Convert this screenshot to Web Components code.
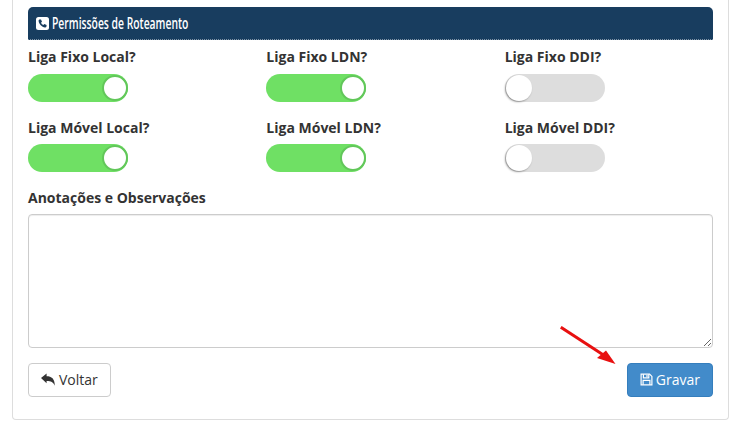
<!DOCTYPE html>
<html lang="pt">
<head>
<meta charset="utf-8">
<title>Permissões de Roteamento</title>
<style>
  html, body { margin: 0; height: 100%; background: #fff; overflow: hidden; }
  body { font-family: "Open Sans", "Liberation Sans", sans-serif; color: #333; }
</style>
</head>
<body>
<route-panel>
  <section-title>Permissões de Roteamento</section-title>
  <div slot="grid">
    <route-toggle label="Liga Fixo Local?" checked></route-toggle>
    <route-toggle label="Liga Fixo LDN?" checked></route-toggle>
    <route-toggle label="Liga Fixo DDI?"></route-toggle>
    <route-toggle label="Liga Móvel Local?" checked></route-toggle>
    <route-toggle label="Liga Móvel LDN?" checked></route-toggle>
    <route-toggle label="Liga Móvel DDI?"></route-toggle>
  </div>
  <notes-field slot="notes" label="Anotações e Observações"></notes-field>
  <action-button slot="back" icon="reply">Voltar</action-button>
  <action-button slot="save" icon="save" primary>Gravar</action-button>
</route-panel>

<script>
// painel externo com borda; o topo fica cortado pela janela
class RoutePanel extends HTMLElement {
    constructor() {
        super();
        this.attachShadow({ mode: 'open' });
    }

    connectedCallback() {
        this.shadowRoot.innerHTML = `
            <style>
                :host {
                    display: block;
                    width: 717px;
                    height: 421px;
                    margin: -1px 0 0 12px;
                    box-sizing: border-box;
                    border: 1px solid #ddd;
                    border-top: 0;
                    border-radius: 0 0 4px 4px;
                    padding: 8px 15px 0;
                    position: relative;
                }
                ::slotted([slot="grid"]) {
                    display: grid;
                    grid-template-columns: repeat(3, 238.33px);
                    row-gap: 16.2px;
                    margin-top: 7.4px;
                }
                .actions {
                    display: flex;
                    justify-content: space-between;
                    margin-top: 15px;
                }
                .arrow {
                    position: absolute;
                    left: 547px;
                    top: 327px;
                }
            </style>
            <slot></slot>
            <slot name="grid"></slot>
            <slot name="notes"></slot>
            <div class="actions">
                <slot name="back"></slot>
                <slot name="save"></slot>
            </div>
            <svg class="arrow" width="64" height="42" viewBox="0 0 64 42">
                <path d="M0.8 1.2 L45 30" stroke="#e81010" stroke-width="3" fill="none"/>
                <path d="M55.5 38 L37 32 L46 24.5 Z" fill="#e81010"/>
            </svg>
        `;
    }
}

// barra azul do título da seção
class SectionTitle extends HTMLElement {
    constructor() {
        super();
        this.attachShadow({ mode: 'open' });
    }

    connectedCallback() {
        this.shadowRoot.innerHTML = `
            <style>
                :host {
                    display: flex;
                    align-items: center;
                    height: 33px;
                    box-sizing: border-box;
                    padding-left: 8px;
                    background: #183d5f;
                    border-radius: 5px 5px 0 0;
                    border-bottom: 1px dotted #7f93a6;
                    color: #fff;
                }
                svg { flex: none; margin-right: 3px; }
                .text {
                    display: inline-block;
                    font: 600 17px "Open Sans", sans-serif;
                    white-space: nowrap;
                    margin-top: -2px;
                    transform: scaleX(0.608);
                    transform-origin: left center;
                }
            </style>
            <svg width="13" height="13" viewBox="0 0 13 13">
                <rect width="13" height="13" rx="2.5" fill="#fff"/>
                <path d="M3.4 2.6 L5 2.4 L6 4.8 L5 5.7 C5.5 6.8 6.3 7.6 7.4 8.1 L8.3 7.1 L10.6 8.1 L10.4 9.7 C10.2 10.3 9.6 10.6 9 10.5 C5.8 10.1 3 7.3 2.6 4.1 C2.5 3.4 2.8 2.8 3.4 2.6 Z" fill="#183d5f"/>
            </svg>
            <span class="text"><slot></slot></span>
        `;
    }
}

// rótulo + chave liga/desliga
class RouteToggle extends HTMLElement {
    constructor() {
        super();
        this.attachShadow({ mode: 'open' });
    }

    connectedCallback() {
        const label = this.getAttribute('label');
        this.shadowRoot.innerHTML = `
            <style>
                :host { display: block; }
                .label {
                    display: block;
                    font: 700 14px/20px "Open Sans", sans-serif;
                    color: #333;
                    margin-bottom: 6.4px;
                }
                .switch {
                    width: 100px;
                    height: 28px;
                    box-sizing: border-box;
                    border-radius: 14px;
                    background: #ddd;
                    position: relative;
                }
                .knob {
                    position: absolute;
                    left: 1px;
                    top: 1px;
                    width: 26px;
                    height: 26px;
                    box-sizing: border-box;
                    border-radius: 50%;
                    background: #fff;
                    box-shadow: -1px 1px 2px rgba(0,0,0,0.35);
                }
                :host([checked]) .switch { background: #6fe064; }
                :host([checked]) .knob {
                    left: 74px;
                    border: 2px solid #62c75a;
                    box-shadow: none;
                }
            </style>
            <span class="label">${label}</span>
            <div class="switch"><div class="knob"></div></div>
        `;
    }
}

// campo de anotações
class NotesField extends HTMLElement {
    constructor() {
        super();
        this.attachShadow({ mode: 'open' });
    }

    connectedCallback() {
        const label = this.getAttribute('label');
        this.shadowRoot.innerHTML = `
            <style>
                :host { display: block; margin-top: 15.6px; }
                .label {
                    display: block;
                    font: 700 14px/20px "Open Sans", sans-serif;
                    color: #333;
                    margin-bottom: 6px;
                }
                textarea {
                    display: block;
                    width: 685px;
                    height: 134px;
                    box-sizing: border-box;
                    margin: 0;
                    border: 1px solid #ccc;
                    border-radius: 4px;
                    background: #fff;
                    box-shadow: inset 0 1px 1px rgba(0,0,0,0.075);
                    outline: none;
                }
            </style>
            <span class="label">${label}</span>
            <textarea></textarea>
        `;
    }
}

// botões Voltar / Gravar
class ActionButton extends HTMLElement {
    constructor() {
        super();
        this.attachShadow({ mode: 'open' });
    }

    connectedCallback() {
        const icons = {
            reply: `<svg width="15" height="13" viewBox="0 0 15 13"><path d="M0 5 L5.6 0.4 V3.2 C10.6 3.2 13.8 5.6 13.8 12.8 C12.4 9.2 10 8 5.6 8 V10.2 Z" fill="#333"/></svg>`,
            save: `<svg width="13" height="13" viewBox="0 0 13 13" fill="none" stroke="#fff" stroke-width="1.2"><path d="M1.1 1.1 H9.6 L11.9 3.4 V11.9 H1.1 Z"/><path d="M3.4 1.3 V4.9 H8.8 V1.3 M3.1 11.7 V7.4 H9.9 V11.7"/><path d="M7 2 V4" /></svg>`
        };
        const icon = icons[this.getAttribute('icon')];
        this.shadowRoot.innerHTML = `
            <style>
                :host {
                    display: inline-flex;
                    align-items: center;
                    gap: 3px;
                    height: 34px;
                    box-sizing: border-box;
                    padding: 0 12px;
                    border: 1px solid #ccc;
                    border-radius: 4px;
                    background: #fff;
                    color: #333;
                    font: 14px "Open Sans", sans-serif;
                }
                :host([primary]) {
                    background: #428bca;
                    border-color: #357ebd;
                    color: #fff;
                }
                svg { flex: none; }
            </style>
            ${icon}
            <slot></slot>
        `;
    }
}

customElements.define('route-panel', RoutePanel);
customElements.define('section-title', SectionTitle);
customElements.define('route-toggle', RouteToggle);
customElements.define('notes-field', NotesField);
customElements.define('action-button', ActionButton);
</script>
</body>
</html>
